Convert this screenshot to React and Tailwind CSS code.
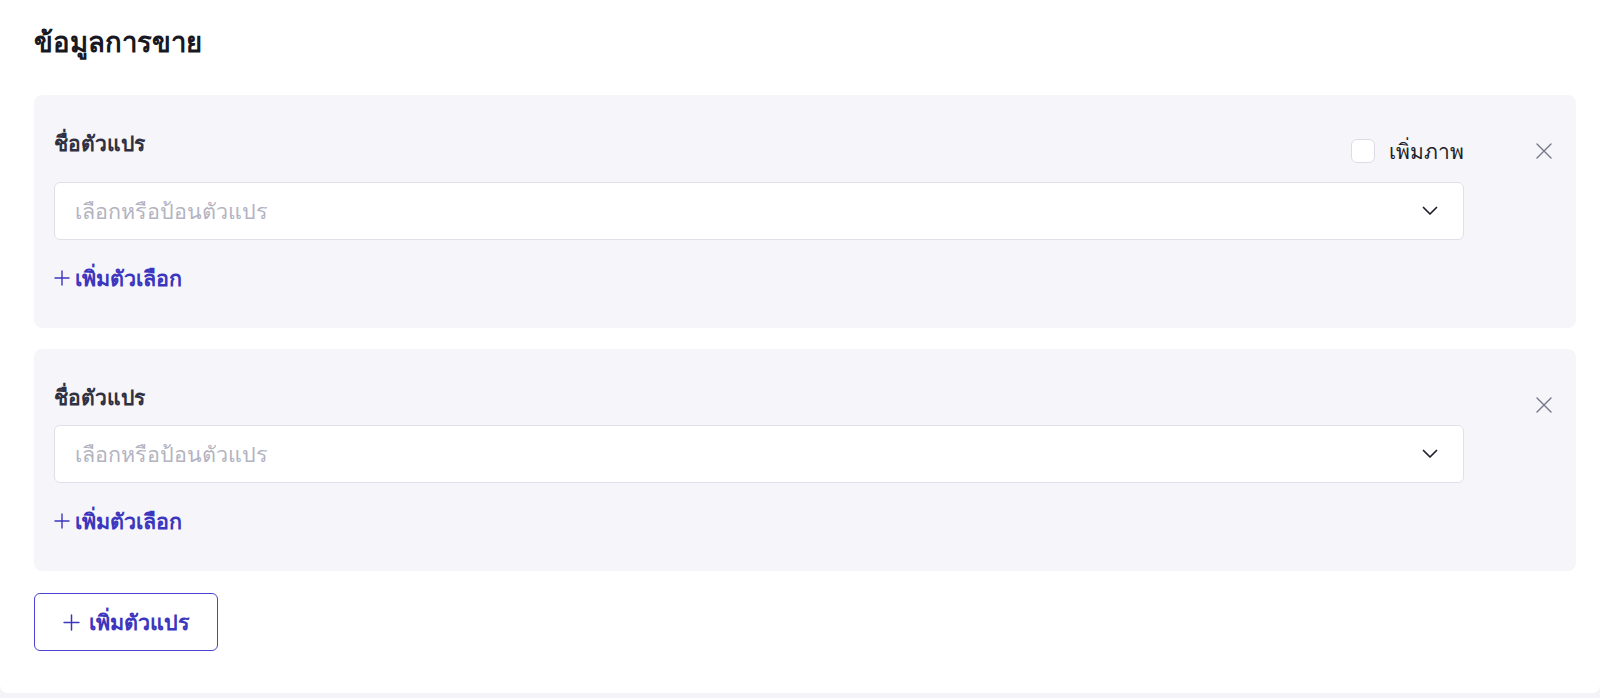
function CloseIcon() {
  return (
    <svg width="16" height="16" viewBox="0 0 16 16" fill="none" stroke="currentColor" strokeWidth="1.4" strokeLinecap="round">
      <path d="M1 1l14 14M15 1L1 15" />
    </svg>
  );
}

function Chevron() {
  return (
    <svg width="16" height="10" viewBox="0 0 16 10" fill="none" stroke="currentColor" strokeWidth="1.7" strokeLinecap="round" strokeLinejoin="round">
      <path d="M1.5 1.5l6.5 6.5 6.5-6.5" />
    </svg>
  );
}

function PlusIcon({ size = 16 }) {
  return (
    <svg width={size} height={size} viewBox="0 0 16 16" fill="none" stroke="currentColor" strokeWidth="1.4" strokeLinecap="round">
      <path d="M8 1v14M1 8h14" />
    </svg>
  );
}

function VariantCard({ withImage }) {
  return (
    <div className="flex items-start gap-[72px] rounded-lg bg-[#f6f6fa] pl-5 pr-6 pt-[34px] pb-9">
      <div className="flex-1">
        <div className="flex items-start justify-between">
          <span className="text-[21px] leading-[28px] font-semibold text-[#2f3142]">ชื่อตัวแปร</span>
          {withImage && (
            <label className="mt-2 flex h-[28px] items-center gap-[14px]">
              <span className="block h-6 w-6 rounded-md border border-[#dcdce6] bg-white" />
              <span className="text-[21px] leading-[28px] text-[#1f1f2b]">เพิ่มภาพ</span>
            </label>
          )}
        </div>
        <div
          className={
            "flex h-[58px] items-center justify-between rounded-md border border-[#e0e0ea] bg-white pl-5 pr-[25px] " +
            (withImage ? "mt-[17px]" : "mt-[14px]")
          }
        >
          <span className="text-[21.5px] text-[#b3b3c1]">เลือกหรือป้อนตัวแปร</span>
          <span className="text-[#1f1f2b]">
            <Chevron />
          </span>
        </div>
        <button className="mt-6 flex h-[28px] items-center gap-[5px] text-[21.5px] font-bold text-[#3c36be]">
          <PlusIcon size={16} />
          <span>เพิ่มตัวเลือก</span>
        </button>
      </div>
      <button className="mt-[14px] text-[#75758a]">
        <CloseIcon />
      </button>
    </div>
  );
}

export default function App() {
  return (
    <div className="min-h-[698px] bg-[#f4f4f8] font-['Noto_Sans',sans-serif]">
      <div className="rounded-b-lg bg-white pt-[22px] pr-6 pb-[42px] pl-[34px]">
        <h1 className="text-[27.5px] leading-[40px] font-bold text-[#181822]">ข้อมูลการขาย</h1>
        <div className="mt-[33px] flex flex-col gap-[21px]">
          <VariantCard withImage />
          <VariantCard />
        </div>
        <button className="mt-[22px] flex h-[58px] w-[184px] items-center justify-center gap-[9px] rounded-md border border-[#4a43d2] text-[21.5px] font-bold text-[#3c36be]">
          <PlusIcon size={17} />
          <span>เพิ่มตัวแปร</span>
        </button>
      </div>
    </div>
  );
}
